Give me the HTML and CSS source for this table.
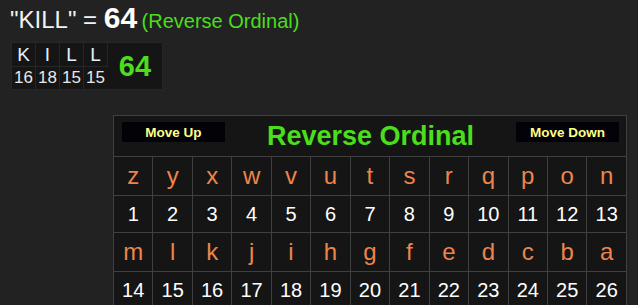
FILE: index.html
```html
<!DOCTYPE html>
<html lang="en">
<head>
    <meta charset="UTF-8" />
    <meta name="viewport" content="width=device-width, initial-scale=1.0" />
    <title>Gematria - Reverse Ordinal</title>
    <link rel="stylesheet" href="styles.css">
</head>
<body>
    <div class="page">
        <div class="result">
            <span class="phrase">"KILL" = </span><span class="total">64</span>
            <span class="cipher-name">(Reverse Ordinal)</span>
        </div>

        <table class="breakdown">
            <tr class="letters">
                <td>K</td><td>I</td><td>L</td><td>L</td>
                <td class="sum" rowspan="2">64</td>
            </tr>
            <tr class="values">
                <td>16</td><td>18</td><td>15</td><td>15</td>
            </tr>
        </table>

        <div class="chart-wrap">
            <table class="chart">
                <tr class="chart-head">
                    <td colspan="13">
                        <div class="head-inner">
                            <button class="move-btn">Move Up</button>
                            <span class="chart-title">Reverse Ordinal</span>
                            <button class="move-btn">Move Down</button>
                        </div>
                    </td>
                </tr>
                <tr class="chart-letters">
                    <td>z</td><td>y</td><td>x</td><td>w</td><td>v</td><td>u</td><td>t</td>
                    <td>s</td><td>r</td><td>q</td><td>p</td><td>o</td><td>n</td>
                </tr>
                <tr class="chart-values">
                    <td>1</td><td>2</td><td>3</td><td>4</td><td>5</td><td>6</td><td>7</td>
                    <td>8</td><td>9</td><td>10</td><td>11</td><td>12</td><td>13</td>
                </tr>
                <tr class="chart-letters">
                    <td>m</td><td>l</td><td>k</td><td>j</td><td>i</td><td>h</td><td>g</td>
                    <td>f</td><td>e</td><td>d</td><td>c</td><td>b</td><td>a</td>
                </tr>
                <tr class="chart-values">
                    <td>14</td><td>15</td><td>16</td><td>17</td><td>18</td><td>19</td><td>20</td>
                    <td>21</td><td>22</td><td>23</td><td>24</td><td>25</td><td>26</td>
                </tr>
            </table>
        </div>
    </div>
</body>
</html>
```

FILE: styles.css
```css
:root {
    --page-bg: #222222;
    --cell-bg: #151515;
    --grid-line: #404040;
    --green: #4ade1c;
    --orange: #ee8449;
    --button-text: #ffff88;
}

body {
    margin: 0;
    background-color: var(--page-bg);
    color: #eeeeee;
    font-family: 'Liberation Sans', Arial, sans-serif;
}

.page {
    padding: 0 11px 0 10px;
}

/* phrase = total line */
.result {
    height: 36px;
    line-height: 36px;
    white-space: nowrap;
}

.phrase {
    font-size: 24px;
    color: #f2f2f2;
}

.total {
    font-size: 30px;
    font-weight: bold;
    color: #ffffff;
}

.cipher-name {
    font-size: 20px;
    color: var(--green);
}

/* letter by letter breakdown */
.breakdown {
    margin: 6px 0 0 1px;
    border-collapse: collapse;
    background-color: var(--cell-bg);
    border: 1px solid #2a2a2a;
}

.breakdown td {
    width: 23px;
    padding: 0;
    text-align: center;
    border: 1px solid #262626;
}

.breakdown .letters td {
    height: 23px;
    font-size: 19px;
    color: #e6f0ff;
}

.breakdown .values td {
    height: 22px;
    font-size: 17px;
    color: #e8e8e8;
}

.breakdown td.sum {
    width: 54px;
    font-size: 29px;
    font-weight: bold;
    color: var(--green);
    border-left-color: var(--cell-bg);
}

/* cipher chart */
.chart-wrap {
    display: flex;
    justify-content: flex-end;
    margin-top: 25px;
}

.chart {
    width: 514px;
    table-layout: fixed;
    border-collapse: collapse;
    background-color: var(--cell-bg);
}

.chart td {
    padding: 0;
    text-align: center;
    border: 1px solid var(--grid-line);
}

.chart-head td {
    height: 40px;
    vertical-align: top;
}

.head-inner {
    display: flex;
    justify-content: space-between;
    align-items: flex-start;
    padding: 5px 7px 0 8px;
}

.move-btn {
    width: 103px;
    height: 20px;
    margin-top: 1px;
    padding: 0;
    border: none;
    background-color: #020208;
    color: var(--button-text);
    font-family: 'Liberation Sans', Arial, sans-serif;
    font-size: 13.5px;
    font-weight: bold;
}

.chart-title {
    line-height: 30px;
    font-size: 27px;
    font-weight: bold;
    color: var(--green);
}

.chart-letters td {
    height: 38px;
    font-size: 24px;
    color: var(--orange);
}

.chart-values td {
    height: 36px;
    font-size: 20px;
    color: #ffffff;
}
```
